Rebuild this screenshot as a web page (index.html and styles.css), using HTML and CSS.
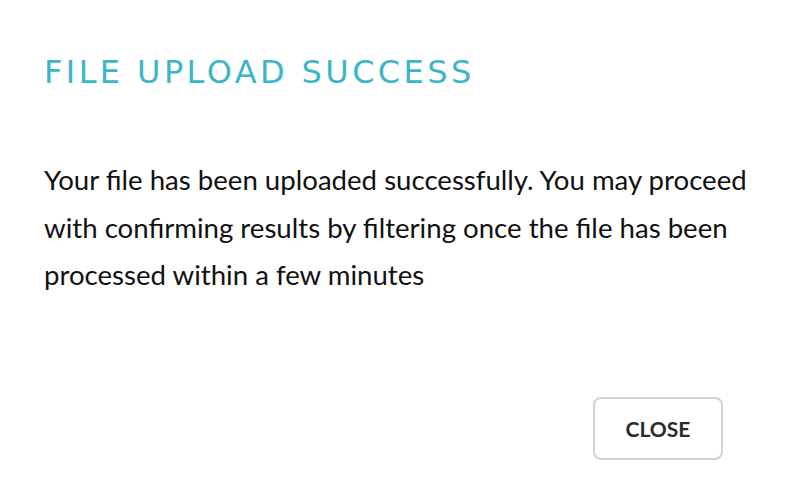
FILE: index.html
```html
<!DOCTYPE html>
<html>
<head>
<meta charset="utf-8">
<link rel="stylesheet" href="styles.css">
</head>
<body>
<div class="dialog">
  <h1 class="title">FILE UPLOAD SUCCESS</h1>
  <p class="message">Your file has been uploaded successfully. You may proceed with confirming results by filtering once the file has been processed within a few minutes</p>
  <div class="actions">
    <button class="close-btn">CLOSE</button>
  </div>
</div>
</body>
</html>
```
FILE: styles.css
```css
html, body {
  margin: 0;
  padding: 0;
  background: #fff;
}
.dialog {
  width: 790px;
  height: 500px;
  box-sizing: border-box;
  padding: 52px 67px 0 44px;
  font-family: Lato, "Liberation Sans", sans-serif;
}
.title {
  margin: 0;
  font-family: "DejaVu Sans", sans-serif;
  font-weight: 400;
  font-size: 32px;
  line-height: 40px;
  color: #3bb6c6;
  letter-spacing: 3.4px;
}
.message {
  margin: 64px -50px 0 0;
  font-size: 27.6px;
  line-height: 47.5px;
  color: #111;
  max-width: 720px;
}
.actions {
  display: flex;
  justify-content: flex-end;
  margin-top: 98px;
}
.close-btn {
  width: 130px;
  height: 63px;
  border: 2px solid #d2d2d2;
  border-radius: 8px;
  background: #fff;
  font-family: Lato, sans-serif;
  font-weight: 700;
  font-size: 21px;
  color: #2b2b2b;
}
```
